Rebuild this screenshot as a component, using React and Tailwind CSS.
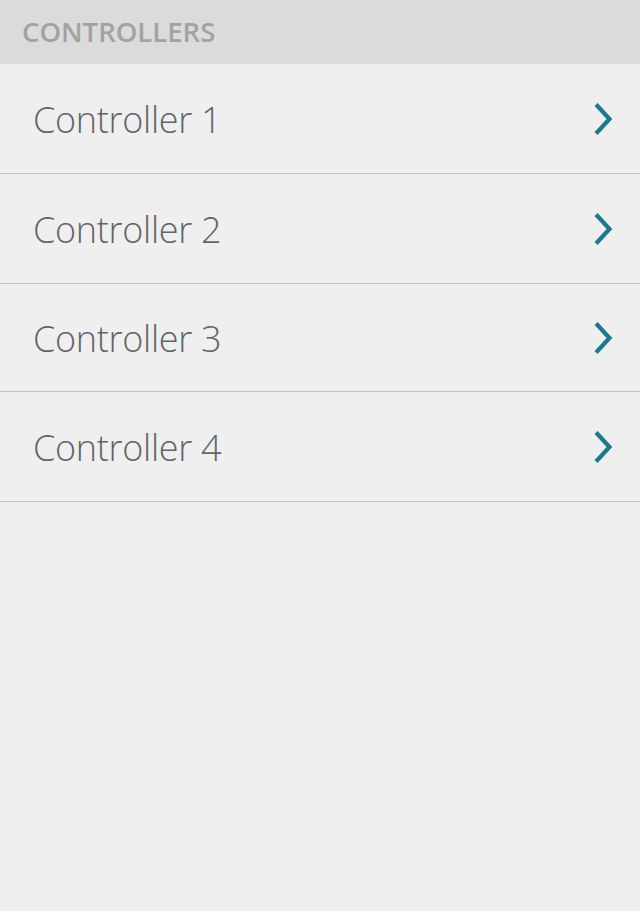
export default function App() {
  const items = [
    { t: "Controller 1", h: "h-[110px]" },
    { t: "Controller 2", h: "h-[110px]" },
    { t: "Controller 3", h: "h-[108px]" },
    { t: "Controller 4", h: "h-[110px]" },
  ];
  return (
    <div className="min-h-[911px] w-[640px] bg-[#efefef]" style={{ fontFamily: '"Open Sans", sans-serif' }}>
      <div className="h-16 bg-[#dbdbdb] flex items-center pl-[22px]">
        <span className="text-[27.5px] font-semibold text-[#a2a2a5]">CONTROLLERS</span>
      </div>
      <ul>
        {items.map(({ t, h }) => (
          <li key={t} className={`${h} border-b border-[#c2c2c2] flex items-center justify-between pl-[33px] pr-[26px]`}>
            <span className="text-[36px] font-light tracking-[-0.3px] text-[#62646a] pt-[2px]">{t}</span>
            <svg width="20" height="32" viewBox="0 0 20 32" fill="none">
              <path d="M3.5 3 L15.5 16 L3.5 29" stroke="#1a7a8e" strokeWidth="4.2" strokeLinecap="square" strokeLinejoin="miter" />
            </svg>
          </li>
        ))}
      </ul>
    </div>
  );
}
